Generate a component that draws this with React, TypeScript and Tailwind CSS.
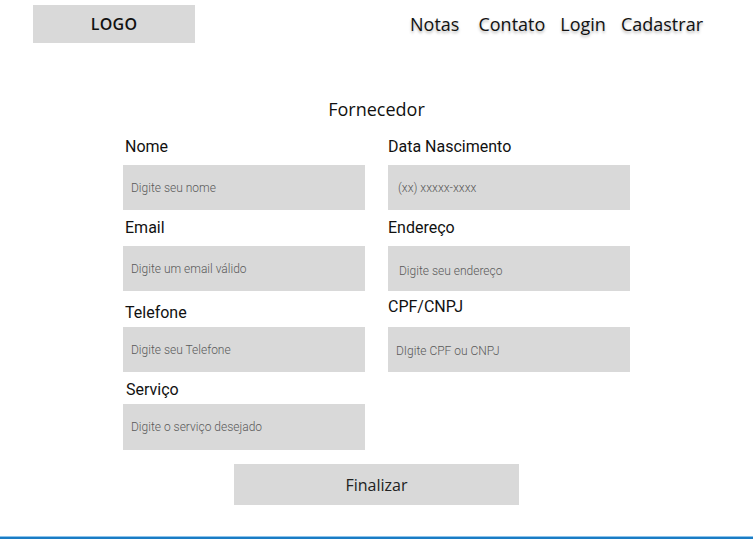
import React from "react";

type Field = {
  label: string;
  placeholder: string;
  labelClass: string;
  inputClass: string;
};

const leftFields: Field[] = [
  { label: "Nome", placeholder: "Digite seu nome", labelClass: "mb-2 pl-[2px]", inputClass: "h-[45px] pl-2" },
  { label: "Email", placeholder: "Digite um email válido", labelClass: "mt-2 mb-2 pl-[2px]", inputClass: "h-[45px] pl-2" },
  { label: "Telefone", placeholder: "Digite seu Telefone", labelClass: "mt-3 mb-1 pl-[2px]", inputClass: "h-[45px] pl-2" },
  { label: "Serviço", placeholder: "Digite o serviço desejado", labelClass: "mt-2 mb-1 pl-[3px]", inputClass: "h-[46px] pl-2" },
];

const rightFields: Field[] = [
  { label: "Data Nascimento", placeholder: "(xx) xxxxx-xxxx", labelClass: "mb-2", inputClass: "h-[45px] pl-[10px]" },
  { label: "Endereço", placeholder: "Digite seu endereço", labelClass: "mt-2 mb-2", inputClass: "h-[45px] pl-[11px] pt-[5px]" },
  { label: "CPF/CNPJ", placeholder: "DIgite CPF ou CNPJ", labelClass: "mt-[6px] mb-[10px]", inputClass: "h-[45px] pl-2 pt-[2px]" },
];

function FieldColumn({ fields }: { fields: Field[] }) {
  return (
    <div className="flex flex-col">
      {fields.map((f) => (
        <React.Fragment key={f.label}>
          <label className={`block text-[16px] leading-5 text-[#111] ${f.labelClass}`}>{f.label}</label>
          <input
            className={`w-full bg-[#d9d9d9] text-[12px] font-light text-[#333] outline-none placeholder:text-[#595959] ${f.inputClass}`}
            placeholder={f.placeholder}
          />
        </React.Fragment>
      ))}
    </div>
  );
}

export default function App() {
  return (
    <div className="flex h-[539px] flex-col bg-white font-['Roboto',sans-serif]">
      <header className="flex items-start justify-between pl-[33px] pr-[50px] pt-[5px]">
        <div className="flex h-[38px] w-[162px] items-center justify-center bg-[#d9d9d9] font-['Open_Sans',sans-serif] text-[16px] font-semibold tracking-[0.3px] text-[#111]">
          LOGO
        </div>
        <nav className="flex items-center gap-[15px] pt-[7px] font-['Open_Sans',sans-serif] text-[18px] font-medium leading-6 text-[#111] [text-shadow:0_2px_3px_rgba(0,0,0,0.3)]">
          <a className="mr-[4px]">Notas</a>
          <a>Contato</a>
          <a>Login</a>
          <a>Cadastrar</a>
        </nav>
      </header>

      <main className="mx-auto mt-[54px] w-[507px]">
        <h1 className="mb-4 text-center font-['Open_Sans',sans-serif] text-[18px] leading-6 text-[#111]">Fornecedor</h1>
        <div className="grid grid-cols-[242px_242px] gap-x-[23px]">
          <FieldColumn fields={leftFields} />
          <FieldColumn fields={rightFields} />
        </div>
        <div className="mt-[14px] flex justify-center">
          <button className="h-[41px] w-[285px] bg-[#d9d9d9] font-['Open_Sans',sans-serif] text-[16px] text-[#222]">
            Finalizar
          </button>
        </div>
      </main>

      <div className="mt-auto h-[3px] border-t border-[#8cc4ec] bg-[#1a7cc4]" />
    </div>
  );
}
